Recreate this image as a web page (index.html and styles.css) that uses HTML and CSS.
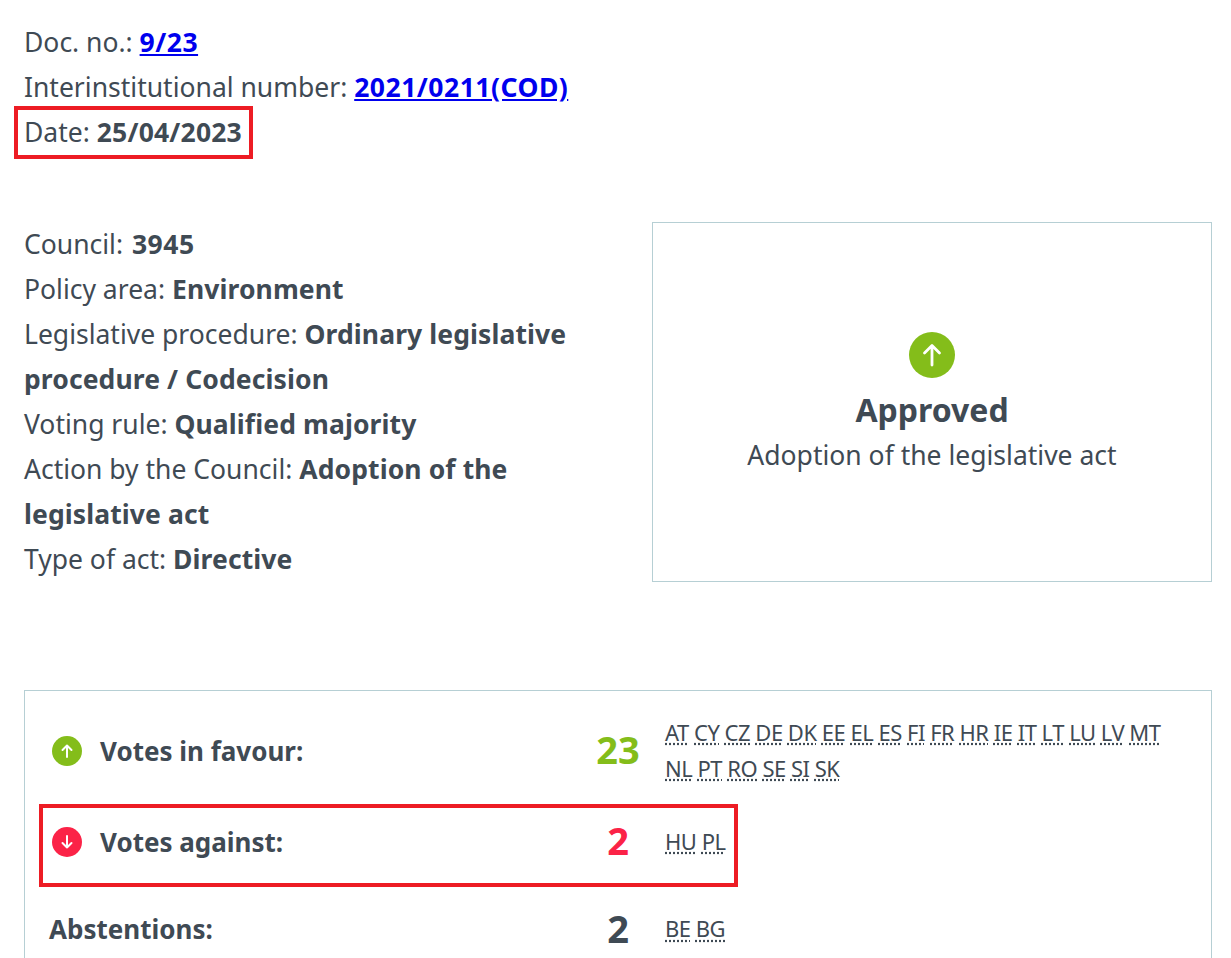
FILE: index.html
```html
<!DOCTYPE html>
<html lang="en">
<head>
<meta charset="utf-8">
<title>Vote result</title>
<link rel="stylesheet" href="styles.css">
</head>
<body>
<main class="page">
  <section class="doc-meta">
    <p>Doc. no.: <a href="#"><b>9/23</b></a></p>
    <p>Interinstitutional number: <a href="#"><b>2021/0211(COD)</b></a></p>
    <p>Date: <b class="date">25/04/2023</b></p>
  </section>
  <section class="summary">
    <div class="details">
      <p>Council: <b class="council">3945</b></p>
      <p>Policy area: <b>Environment</b></p>
      <p>Legislative procedure: <b>Ordinary legislative procedure / Codecision</b></p>
      <p>Voting rule: <b>Qualified majority</b></p>
      <p>Action by the Council: <b>Adoption of the legislative act</b></p>
      <p>Type of act: <b>Directive</b></p>
    </div>
    <div class="outcome">
      <svg class="outcome-icon" viewBox="0 0 46 46" aria-hidden="true"><circle cx="23" cy="23" r="23" fill="#84bd1a"/><path d="M23 33V14M15.500 21 23 13.500 30.500 21" fill="none" stroke="#fff" stroke-width="2.800" stroke-linecap="round" stroke-linejoin="round"/></svg>
      <div class="outcome-title">Approved</div>
      <div class="outcome-text">Adoption of the legislative act</div>
    </div>
  </section>
  <section class="votes">
    <div class="vote-row favour">
      <svg class="vote-icon" viewBox="0 0 30 30" aria-hidden="true"><circle cx="15" cy="15" r="15" fill="#84bd1a"/><path d="M15 21V9.500M10.500 14 15 9.500 19.500 14" fill="none" stroke="#fff" stroke-width="2" stroke-linecap="round" stroke-linejoin="round"/></svg>
      <div class="vote-label">Votes in favour:</div>
      <div class="vote-count green">23</div>
      <div class="codes"><abbr>AT</abbr> <abbr>CY</abbr> <abbr>CZ</abbr> <abbr>DE</abbr> <abbr>DK</abbr> <abbr>EE</abbr> <abbr>EL</abbr> <abbr>ES</abbr> <abbr>FI</abbr> <abbr>FR</abbr> <abbr>HR</abbr> <abbr>IE</abbr> <abbr>IT</abbr> <abbr>LT</abbr> <abbr>LU</abbr> <abbr>LV</abbr> <abbr>MT</abbr> <abbr>NL</abbr> <abbr>PT</abbr> <abbr>RO</abbr> <abbr>SE</abbr> <abbr>SI</abbr> <abbr>SK</abbr></div>
    </div>
    <div class="vote-row against">
      <svg class="vote-icon" viewBox="0 0 30 30" aria-hidden="true"><circle cx="15" cy="15" r="15" fill="#fb2347"/><path d="M15 9V20.500M10.500 16 15 20.500 19.500 16" fill="none" stroke="#fff" stroke-width="2" stroke-linecap="round" stroke-linejoin="round"/></svg>
      <div class="vote-label">Votes against:</div>
      <div class="vote-count red">2</div>
      <div class="codes"><abbr>HU</abbr> <abbr>PL</abbr></div>
    </div>
    <div class="vote-row abstain">
      <div class="vote-label wide">Abstentions:</div>
      <div class="vote-count">2</div>
      <div class="codes"><abbr>BE</abbr> <abbr>BG</abbr></div>
    </div>
  </section>
</main>
<div class="mark mark-date"></div>
<div class="mark mark-against"></div>
</body>
</html>
```

FILE: styles.css
```css
* { box-sizing: border-box; }
html, body { margin: 0; height: 100%; overflow: hidden; background: #fff; }
body {
  font-family: "Noto Sans", "Liberation Sans", sans-serif;
  font-size: 26.500px;
  line-height: 45px;
  color: #3f4a54;
  position: relative;
  font-variant-ligatures: none;
}
p { margin: 0; }
b { font-weight: 700; letter-spacing: 0.1px; }
a { color: #0000ee; }
a b { letter-spacing: 0.5px; }
b.date { letter-spacing: 0.2px; }
b.council { letter-spacing: 0.5px; margin-left: 2px; }
.page { padding: 20px 19px 0 24px; }
.doc-meta { height: 202px; }
.summary { display: flex; align-items: flex-start; justify-content: space-between; height: 468px; }
.details { width: 560px; }
.outcome {
  width: 560px; height: 360px;
  border: 1px solid #b6cfd4;
  display: flex; flex-direction: column; align-items: center; justify-content: center;
}
.outcome-icon { width: 46px; height: 46px; margin-bottom: 9px; margin-top: 6px; }
.outcome-title { font-size: 32px; font-weight: 700; line-height: 45px; }
.outcome-text { line-height: 45px; margin-top: 1px; }
.votes {
  border: 1px solid #b6cfd4;
  height: 400px;
  padding: 24px 0 0 24px;
}
.vote-row { display: grid; grid-template-columns: 30px 21px 488px 60px 1fr; align-items: center; }
.favour { height: 72px; margin-bottom: 19px; }
.against { height: 72px; margin-bottom: 29px; }
.abstain { height: 36px; }
.vote-icon { width: 30px; height: 30px; margin-left: 3px; grid-column: 1; }
.vote-label { font-weight: 700; grid-column: 3; font-size: 26px; }
.vote-label.wide { grid-column: 1 / 4; }
.vote-count { font-size: 38px; font-weight: 700; text-align: center; grid-column: 4; line-height: 45px; margin-top: -3px; }
.green { color: #84bd1a; }
.red { color: #fb2347; }
.codes { grid-column: 5; font-size: 22px; letter-spacing: -0.5px; line-height: 36px; margin-left: 17px; margin-top: -3px; width: 510px; }
abbr { text-decoration: underline dotted; text-underline-offset: 3px; }
.mark { position: absolute; border: 4px solid #ed1c24; }
.mark-date { left: 14px; top: 106px; width: 239px; height: 53px; }
.mark-against { left: 39px; top: 804px; width: 699px; height: 83px; }
```
